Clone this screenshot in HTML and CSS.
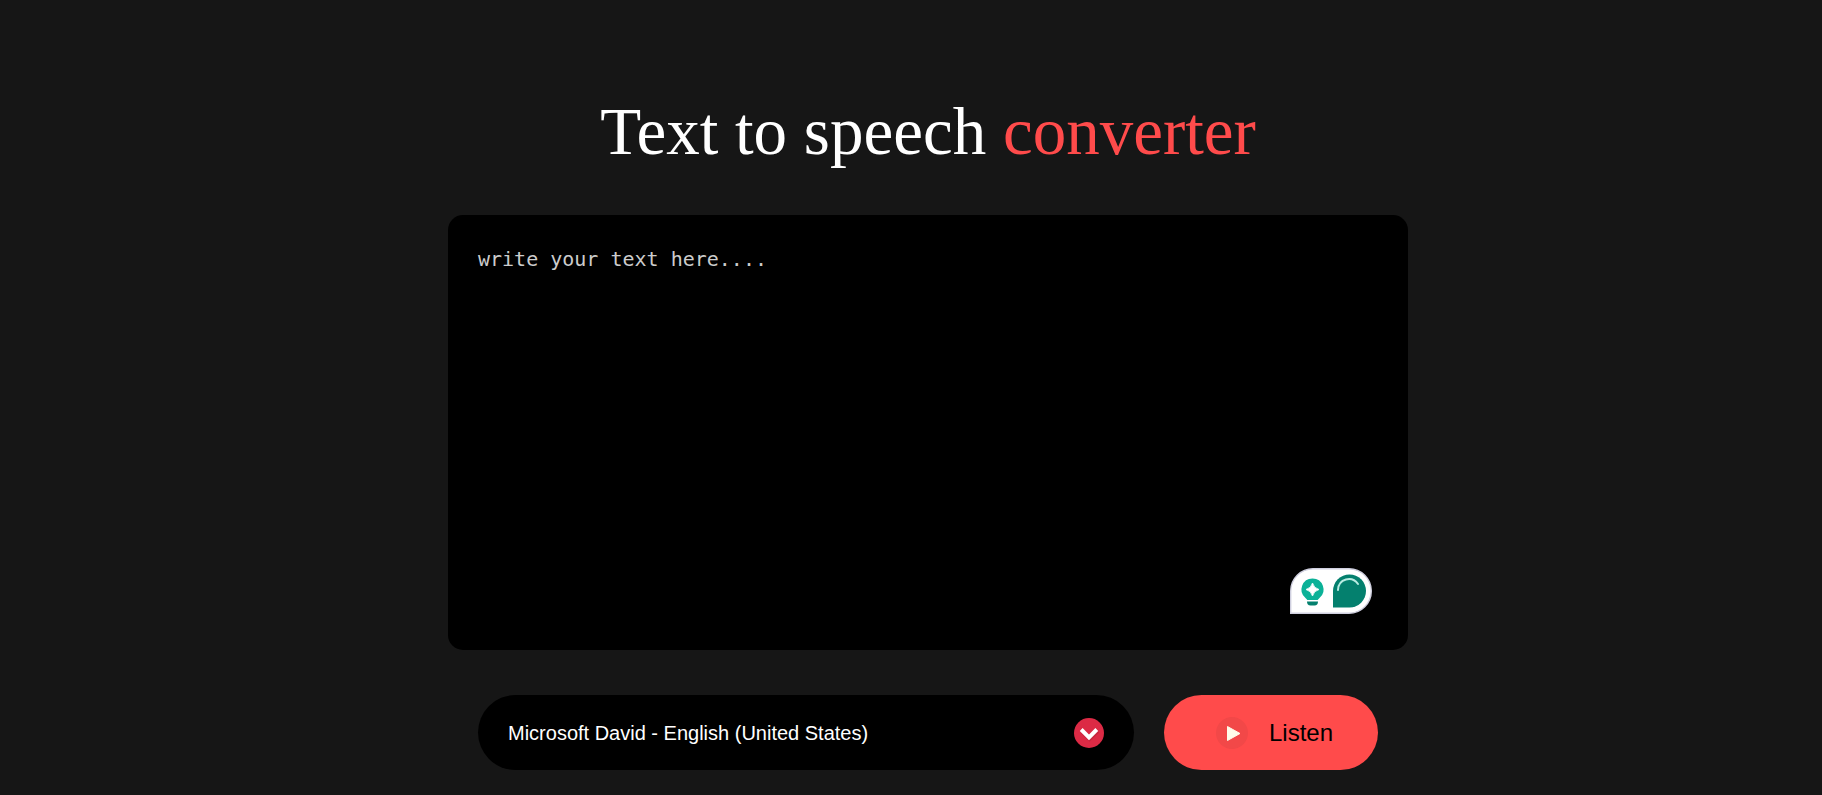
FILE: index.html
```html
<!DOCTYPE html>
<html lang="en">
<head>
<meta charset="utf-8">
<meta name="viewport" content="width=device-width, initial-scale=1">
<title>Text to speech converter</title>
<link rel="stylesheet" href="styles.css">
</head>
<body>
<main class="hero">
  <h1 class="title">Text to speech <span class="accent">converter</span></h1>
  <div class="editor">
    <textarea class="editor-input" placeholder="write your text here...." aria-label="Text to read aloud" spellcheck="false"></textarea>
    <div class="assistant">
      <svg width="82" height="46" viewBox="0 0 82 46" aria-hidden="true">
        <path d="M.7 45.300V23A22.300 22.300 0 0 1 23 .7H59A22.300 22.300 0 0 1 59 45.300Z" fill="#fff" stroke="#cfcfdf" stroke-width="1.4"/>
        <path d="M22.500 10.500A11 11 0 0 0 15.500 30Q17 31.500 17.300 32H27.700Q28 31.500 29.500 30A11 11 0 0 0 22.500 10.500Z" fill="#0bb197"/>
        <path d="M22.500 15Q23.800 20.200 29 21.500Q23.800 22.800 22.500 28Q21.200 22.800 16 21.500Q21.200 20.200 22.500 15Z" fill="#fff" stroke="#fff" stroke-width=".8"/>
        <path d="M17 33.500H28Q28 37.500 24.500 37.500H20.500Q17 37.500 17 33.500Z" fill="#04806e"/>
        <path d="M43 39.500V23A16.500 16.500 0 1 1 59.500 39.500Z" fill="#04806e"/>
        <path d="M48 22C48.500 10.500 62 7.500 68 16" fill="none" stroke="#b9ece2" stroke-width="2" stroke-linecap="round"/>
      </svg>
    </div>
  </div>
  <div class="controls">
    <div class="voice">
      <select class="voice-select" aria-label="Voice">
        <option>Microsoft David - English (United States)</option>
      </select>
      <svg class="voice-icon" width="30" height="30" viewBox="0 0 30 30" aria-hidden="true">
        <circle cx="15" cy="15" r="15" fill="#dc2a45"/>
        <path d="M8 13.500L15.500 21L24 13" fill="none" stroke="#a81d34" stroke-opacity=".4" stroke-width="4"/>
        <path d="M7.200 11.500L15 19.300L22.800 11.500" fill="none" stroke="#fff" stroke-width="4"/>
      </svg>
    </div>
    <button class="listen" type="button">
      <svg width="32" height="32" viewBox="0 0 32 32" aria-hidden="true">
        <circle cx="16" cy="16" r="16" fill="#f24848"/>
        <path d="M11.500 9.500V23.500L24 16.500Z" fill="#fffbe9" stroke="#fffbe9" stroke-linejoin="round"/>
      </svg>
      <span>Listen</span>
    </button>
  </div>
</main>
</body>
</html>
```
FILE: styles.css
```css
* {
  box-sizing: border-box;
  margin: 0;
  padding: 0;
}

body {
  background: #161616;
  color: #fff;
  font-family: "Liberation Sans", Arial, sans-serif;
}

.hero {
  display: flex;
  flex-direction: column;
  align-items: center;
  padding: 91px 0 25px 34px;
}

.title {
  font-family: "Liberation Serif", "Times New Roman", serif;
  font-size: 67px;
  font-weight: 400;
  line-height: 80px;
  text-align: center;
}

.accent {
  color: #ff4b4b;
}

.editor {
  position: relative;
  width: 100%;
  max-width: 960px;
  margin-top: 44px;
}

.editor-input {
  display: block;
  width: 100%;
  height: 435px;
  padding: 30px;
  border: 0;
  border-radius: 15px;
  outline: 0;
  resize: none;
  background: #000;
  color: #fff;
  font-family: "DejaVu Sans Mono", monospace;
  font-size: 20px;
  line-height: 28px;
}

.editor-input::placeholder {
  color: #ccc;
  opacity: 1;
}

.assistant {
  position: absolute;
  right: 36px;
  bottom: 36px;
  display: flex;
}

.controls {
  display: flex;
  gap: 30px;
  width: 100%;
  max-width: 900px;
  margin-top: 45px;
}

.voice {
  position: relative;
  flex: 1;
}

.voice-select {
  appearance: none;
  width: 100%;
  height: 75px;
  padding: 0 70px 0 30px;
  border: 0;
  border-radius: 38px;
  outline: 0;
  background: #000;
  color: #fff;
  font-family: inherit;
  font-size: 20px;
}

.voice-icon {
  position: absolute;
  top: 23px;
  right: 30px;
  pointer-events: none;
}

.listen {
  display: flex;
  align-items: center;
  gap: 21px;
  padding: 0 45px 0 52px;
  border: 0;
  border-radius: 38px;
  background: #ff4b4b;
  color: #000;
  font-family: inherit;
  font-size: 24px;
  cursor: pointer;
}
```
